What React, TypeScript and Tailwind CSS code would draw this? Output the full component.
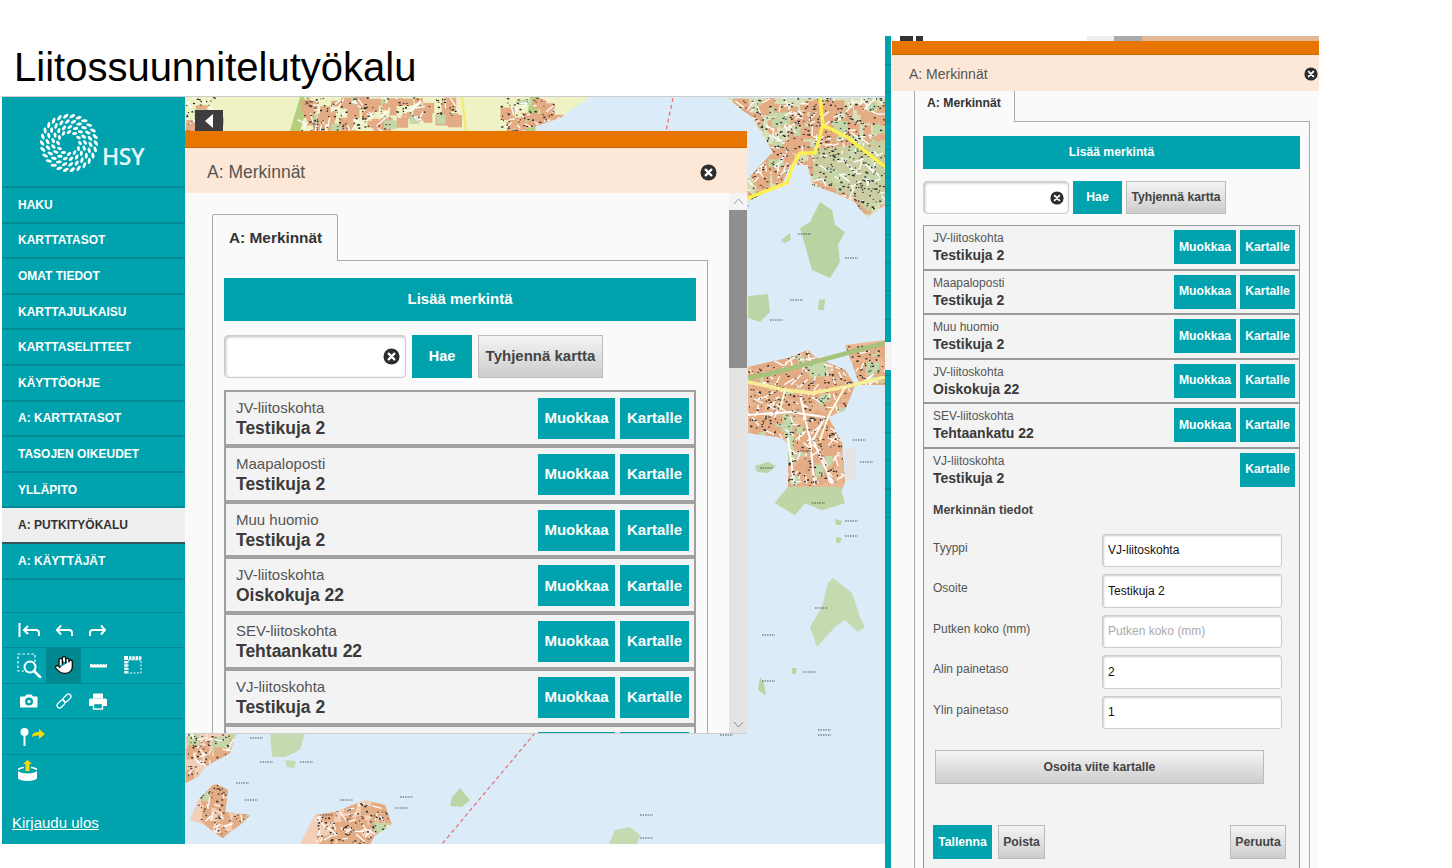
import type { ReactNode } from "react";
import { Hand } from "lucide-react";

const navItems = [
    "HAKU",
    "KARTTATASOT",
    "OMAT TIEDOT",
    "KARTTAJULKAISU",
    "KARTTASELITTEET",
    "KÄYTTÖOHJE",
    "A: KARTTATASOT",
    "TASOJEN OIKEUDET",
    "YLLÄPITO",
    "A: PUTKITYÖKALU",
    "A: KÄYTTÄJÄT",
];

const rows = [
    { type: "JV-liitoskohta", address: "Testikuja 2" },
    { type: "Maapaloposti", address: "Testikuja 2" },
    { type: "Muu huomio", address: "Testikuja 2" },
    { type: "JV-liitoskohta", address: "Oiskokuja 22" },
    { type: "SEV-liitoskohta", address: "Tehtaankatu 22" },
    { type: "VJ-liitoskohta", address: "Testikuja 2" },
];

const formRows = [
    { label: "Tyyppi", value: "VJ-liitoskohta" },
    { label: "Osoite", value: "Testikuja 2" },
    { label: "Putken koko (mm)", value: "" },
    { label: "Alin painetaso", value: "2" },
    { label: "Ylin painetaso", value: "1" },
];

// small seeded generator so the map texture stays the same between runs
function makeRandom(seed: number) {
    let s = seed;
    return () => {
        s = (s * 16807) % 2147483647;
        return s / 2147483647;
    };
}

const urbanAreas = [
    { x: 185, y: 97, w: 30, h: 34 },
    { x: 300, y: 97, w: 90, h: 34 },
    { x: 395, y: 97, w: 60, h: 20 },
    { x: 500, y: 97, w: 55, h: 34 },
    { x: 730, y: 97, w: 155, h: 115 },
    { x: 747, y: 345, w: 138, h: 150 },
    { x: 185, y: 733, w: 50, h: 55 },
    { x: 198, y: 783, w: 55, h: 55 },
    { x: 315, y: 800, w: 75, h: 44 },
];

function buildTexture() {
    const rand = makeRandom(4711);
    const blocks: { x: number; y: number; w: number; h: number; c: string }[] = [];
    const streets: string[] = [];
    const specks: { x: number; y: number; w: number; h: number }[] = [];
    for (const a of urbanAreas) {
        const area = a.w * a.h;
        for (let i = 0; i < area / 60; i++) {
            blocks.push({
                x: a.x + rand() * a.w,
                y: a.y + rand() * a.h,
                w: 6 + rand() * 10,
                h: 5 + rand() * 8,
                c: rand() > 0.12 ? "#e3ac84" : "#c3d7a8",
            });
        }
        for (let i = 0; i < area / 90; i++) {
            const x = a.x + rand() * a.w;
            const y = a.y + rand() * a.h;
            streets.push(`M${x} ${y}l${(rand() - 0.5) * 20} ${(rand() - 0.5) * 20}`);
        }
        for (let i = 0; i < area / 32; i++) {
            specks.push({
                x: a.x + rand() * a.w,
                y: a.y + rand() * a.h,
                w: 0.8 + rand() * 1.6,
                h: 0.8 + rand() * 0.8,
            });
        }
    }
    return { blocks, streets, specks };
}

const texture = buildTexture();

const labels = [
    [736, 206], [798, 234], [845, 258], [760, 468], [800, 451], [853, 440],
    [860, 462], [812, 503], [845, 521], [845, 536], [815, 608], [762, 635], [803, 672], [762, 681],
    [818, 730], [818, 735], [250, 738], [260, 762], [300, 762], [236, 783], [245, 800], [340, 800],
    [320, 815], [395, 808], [400, 797], [640, 815], [640, 838], [720, 735], [790, 300], [770, 320],
];

function MapArt() {
    return (
        <svg className="absolute inset-0 h-full w-full" viewBox="185 97 700 747" preserveAspectRatio="none">
            <defs>
                <clipPath id="land">
                    <path d="M185 97H590L560 118L520 131H185Z" />
                    <path d="M727 98H885V205L867 218L855 202L833 192L812 185L808 165L790 165L783 182L748 202L747 180L773 152L753 118Z" />
                    <path d="M748 367L788 358L808 350L815 357L845 370L855 385L845 410L828 417L842 443L845 483L788 487L788 443L778 437L748 433Z" />
                    <path d="M845 345L885 340V385L860 385Z" />
                    <path d="M185 733H236L230 753L205 767L198 777L185 783Z" />
                    <path d="M198 800L215 783L228 790L225 812L250 815L240 825L222 838L205 825L190 820Z" />
                    <path d="M315 815L335 812L365 800L385 805L392 825L375 835L370 844H300Z" />
                </clipPath>
            </defs>
            <rect x="185" y="97" width="700" height="747" fill="#dbecf8" />
            {/* base land */}
            <path d="M185 97H590L560 118L520 131H185Z" fill="#eef2c4" />
            <path d="M727 98H885V205L867 218L855 202L833 192L812 185L808 165L790 165L783 182L748 202L747 180L773 152L753 118Z" fill="#d9dfb9" />
            <path d="M748 367L788 358L808 350L815 357L845 370L855 385L845 410L828 417L842 443L845 483L838 497L845 503L822 510L805 503L795 515L775 503L788 487L788 443L778 437L748 433Z" fill="#e8b995" />
            <path d="M775 503L788 487H840L845 503L822 510L805 503L795 515Z" fill="#bfd5a5" />
            <path d="M845 450L855 447L857 478L846 482Z" fill="#e4e4e4" />
            <path d="M845 345L885 340V385L860 385Z" fill="#eab993" />
            <path d="M185 733H236L230 753L205 767L198 777L185 783Z" fill="#f3cfb7" />
            <path d="M198 800L215 783L228 790L225 812L250 815L240 825L222 838L205 825L190 820Z" fill="#f3cfb7" />
            <path d="M315 815L335 812L365 800L385 805L392 825L375 835L370 844H300Z" fill="#f3cfb7" />
            {/* green islands */}
            <path d="M820 202L832 210L835 225L845 232L838 245L840 262L830 278L812 270L805 245L800 228L810 222Z" fill="#b9d3a2" />
            <path d="M833 578L852 593L860 617L865 627L858 632L845 620L835 627L817 647L810 627L822 607L828 583Z" fill="#c5dab0" />
            <path d="M270 733H305L300 750L285 757L272 757Z" fill="#c5dab0" />
            <path d="M285 760L296 761L294 768L287 767Z" fill="#c5dab0" />
            <path d="M452 797L460 788L470 800L462 807L450 806Z" fill="#bcd5a6" />
            <path d="M609 844L615 830L630 827L640 835L637 844Z" fill="#c5dab0" />
            <path d="M758 690L760 677L764 683L766 696Z" fill="#bcd5a6" />
            <path d="M792 668L797 668L796 674L792 674Z" fill="#bcd5a6" />
            <path d="M835 519L842 521L841 525L836 525Z" fill="#bcd5a6" />
            <path d="M836 537L842 538L840 543L836 543Z" fill="#bcd5a6" />
            <path d="M755 466L768 462L776 466L768 473L757 472Z" fill="#bcd5a6" />
            <path d="M748 296L768 294L770 312L760 322L748 318Z" fill="#bcd5a6" />
            <path d="M819 300L825 299L824 310L818 310Z" fill="#bcd5a6" />
            <path d="M781 240L790 233L791 240L784 243Z" fill="#bcd5a6" />
            <path d="M300 97L310 97L300 131H290Z" fill="#b5cf7e" />
            <path d="M530 97L542 97L535 131H525Z" fill="#b5cf7e" />
            {/* dense blocks, streets and map lettering */}
            <g clipPath="url(#land)">
                {texture.blocks.map((b, i) => (
                    <rect key={i} x={b.x} y={b.y} width={b.w} height={b.h} fill={b.c} />
                ))}
                <path d="M812 150L885 140V200L868 212L855 198L833 188L814 180Z" fill="#c3d7a8" opacity="0.75" />
                <path d="M782 413L792 415L795 463L788 465Z" fill="#c3d7a8" />
                <path d="M805 362L825 360L830 375L810 378Z" fill="#c3d7a8" />
                <path d={texture.streets.join("")} stroke="#ffffff" strokeWidth="1.300" fill="none" />
                <path d="M788 437L795 490M825 417L813 440L835 490M748 415L790 412L825 417M800 395L810 440L815 490" stroke="#ffffff" strokeWidth="2" fill="none" />
                {texture.specks.map((s, i) => (
                    <rect key={i} x={s.x} y={s.y} width={s.w} height={s.h} fill="#2a2a2a" />
                ))}
            </g>
            {labels.map(([x, y], i) => (
                <path key={i} d={`M${x} ${y}h13`} stroke="#333" strokeWidth="1.200" strokeDasharray="1.500 1" opacity="0.8" />
            ))}
            {/* roads */}
            <path d="M885 167L847 137L823 125L820 98M823 125L815 153L800 153L793 165L787 183L748 198" stroke="#fdf04e" strokeWidth="3.500" fill="none" />
            <path d="M885 343L777 372L748 378" stroke="#a7c27a" strokeWidth="4.500" fill="none" />
            <path d="M748 382L785 390L812 393L845 387L885 377" stroke="#f7ee9a" strokeWidth="3.500" fill="none" />
            <path d="M785 390L780 410M845 387L828 417L820 440" stroke="#fffbd8" strokeWidth="2" fill="none" />
            <path d="M462 97L466 131" stroke="#f4e96b" strokeWidth="2" fill="none" />
            <path d="M673 98L666 131M535 733L442 844" stroke="#e86a72" strokeWidth="1.200" strokeDasharray="4 3" fill="none" />
        </svg>
    );
}

function HsyLogo() {
    const dots: { x: number; y: number; r: number; w: number }[] = [];
    const rings = [
        { radius: 27, count: 26, w: 3.1 },
        { radius: 21.5, count: 22, w: 2.9 },
        { radius: 16, count: 17, w: 2.7 },
        { radius: 11, count: 12, w: 2.5 },
    ];
    rings.forEach((ring, k) => {
        for (let i = 0; i < ring.count; i++) {
            const a = (i / ring.count) * Math.PI * 2 + k * 0.35;
            dots.push({
                x: 29 + Math.cos(a) * ring.radius,
                y: 29 + Math.sin(a) * ring.radius,
                r: (a * 180) / Math.PI + 55,
                w: ring.w,
            });
        }
    });
    return (
        <svg width="58" height="58" viewBox="0 0 58 58">
            {dots.map((d, i) => (
                <ellipse key={i} cx={d.x} cy={d.y} rx={d.w} ry={1.5} fill="#fff" transform={`rotate(${d.r} ${d.x} ${d.y})`} />
            ))}
        </svg>
    );
}

function CloseIcon({ size }: { size: number }) {
    return (
        <svg width={size} height={size} viewBox="0 0 18 18" className="shrink-0">
            <circle cx="9" cy="9" r="8.500" fill="#2d2d2d" />
            <path d="M6 6l6 6M12 6l-6 6" stroke="#fff" strokeWidth="2.400" strokeLinecap="round" />
        </svg>
    );
}

function ToolIcon({ w, h, children }: { w: number; h: number; children: ReactNode }) {
    return (
        <svg width={w} height={h} viewBox={`0 0 ${w} ${h}`} fill="none" stroke="#fff" strokeWidth="2" className="shrink-0">
            {children}
        </svg>
    );
}

function ToolRow({ children }: { children: ReactNode }) {
    return <div className="flex h-[35.6px] items-center border-b border-[#008a93]">{children}</div>;
}

function Sidebar() {
    return (
        <aside className="flex w-[183px] shrink-0 flex-col bg-[#00a3ad]">
            <div className="flex h-[89px] shrink-0 items-start pl-[38px] pt-[17px]">
                <HsyLogo />
                <span className="ml-[4px] mt-[30px] font-['Open_Sans',sans-serif] text-[23px] font-semibold leading-[24px] tracking-[-0.5px] text-white/90">
                    HSY
                </span>
            </div>
            <nav className="flex flex-col border-t-2 border-[#008a93]">
                {navItems.map((item) =>
                    item === "A: PUTKITYÖKALU" ? (
                        <div
                            key={item}
                            className="flex h-[35.6px] items-center border-b-2 border-[#33565a] bg-[#eeeeee] pl-[16px] text-[12px] font-bold text-[#333]"
                        >
                            {item}
                        </div>
                    ) : (
                        <div
                            key={item}
                            className="flex h-[35.6px] items-center border-b-2 border-[#008a93] pl-[16px] text-[12px] font-bold text-white"
                        >
                            {item}
                        </div>
                    ),
                )}
            </nav>
            <div className="h-[33px] shrink-0 border-b border-[#008a93]" />
            <div className="flex flex-col">
                <ToolRow>
                    <div className="ml-[9px] flex w-[35px] justify-center">
                        <ToolIcon w={22} h={16}>
                            <path d="M1.500 1v14M21 14v-3a3 3 0 0 0-3-3H6M10 4L6 8l4 4" />
                        </ToolIcon>
                    </div>
                    <div className="flex w-[35px] justify-center">
                        <ToolIcon w={18} h={14}>
                            <path d="M17 13v-3a3 3 0 0 0-3-3H2M6 2.500L2 7l4 4.500" />
                        </ToolIcon>
                    </div>
                    <div className="flex w-[34px] justify-center">
                        <ToolIcon w={18} h={14}>
                            <path d="M1 13v-3a3 3 0 0 1 3-3h12M12 2.500L16 7l-4 4.500" />
                        </ToolIcon>
                    </div>
                </ToolRow>
                <ToolRow>
                    <div className="flex w-[44px] justify-center pl-[10px]">
                        <ToolIcon w={25} h={25}>
                            <rect x="1" y="1" width="17" height="17" strokeWidth="1.200" strokeDasharray="2.500 2" />
                            <circle cx="13" cy="14" r="5.500" fill="#00a3ad" />
                            <path d="M17 18l6 6" strokeWidth="2.600" strokeLinecap="round" />
                        </ToolIcon>
                    </div>
                    <div className="flex h-full w-[35px] items-center justify-center bg-[#008790]">
                        <Hand size={20} fill="#fff" stroke="#111" strokeWidth={1.6} />
                    </div>
                    <div className="flex w-[35px] justify-center">
                        <ToolIcon w={17} h={5}>
                            <rect x="0" y="1" width="17" height="3.500" fill="#fff" stroke="none" />
                            <path d="M3 0v2M6 0v2M9 0v2M12 0v2M15 0v2" stroke="#00a3ad" strokeWidth="1" />
                        </ToolIcon>
                    </div>
                    <div className="flex w-[34px] justify-center">
                        <ToolIcon w={18} h={18}>
                            <rect x="4" y="4" width="13" height="13" strokeWidth="1" strokeDasharray="2 1.500" />
                            <rect x="0" y="0" width="4" height="4" fill="#fff" stroke="none" />
                            <path d="M5 2h13M2 5v13" strokeWidth="3.500" strokeDasharray="2.500 0.800" />
                        </ToolIcon>
                    </div>
                </ToolRow>
                <ToolRow>
                    <div className="ml-[9px] flex w-[35px] justify-center">
                        <ToolIcon w={18} h={14}>
                            <path d="M1 2.500h4l1.500-2h5l1.500 2h4a1 1 0 0 1 .5 1v9a1 1 0 0 1-1 1H1a1 1 0 0 1-1-1v-9a1 1 0 0 1 1-1z" fill="#fff" stroke="none" />
                            <circle cx="9" cy="7.500" r="3" fill="#00a3ad" stroke="#00a3ad" />
                            <circle cx="9" cy="7.500" r="1.600" fill="#fff" stroke="none" />
                        </ToolIcon>
                    </div>
                    <div className="flex w-[35px] justify-center">
                        <ToolIcon w={18} h={18}>
                            <g strokeWidth="1.300">
                                <rect x="-4.500" y="-2.500" width="9" height="5" rx="2.500" transform="translate(6 12) rotate(-45)" />
                                <rect x="-4.500" y="-2.500" width="9" height="5" rx="2.500" transform="translate(12 6) rotate(-45)" />
                            </g>
                        </ToolIcon>
                    </div>
                    <div className="flex w-[34px] justify-center">
                        <ToolIcon w={18} h={17}>
                            <rect x="4" y="0.500" width="10" height="5" fill="#fff" stroke="none" />
                            <path d="M1.500 5.500h15a1.500 1.500 0 0 1 1.500 1.500v6h-18v-6a1.500 1.500 0 0 1 1.500-1.500z" fill="#fff" stroke="none" />
                            <rect x="4.500" y="10.500" width="9" height="5.500" fill="#00a3ad" stroke="#fff" strokeWidth="1.400" />
                        </ToolIcon>
                    </div>
                </ToolRow>
                <ToolRow>
                    <div className="pl-[17px]">
                        <ToolIcon w={27} h={20}>
                            <circle cx="5.500" cy="5" r="4" fill="#fff" stroke="none" />
                            <path d="M5.500 8v11" strokeWidth="2" />
                            <path d="M13 10c0-4 3-5 7-5V2l6 5-6 5V8.500c-3 0-5 0-7 1.500z" fill="#f5d90a" stroke="none" />
                        </ToolIcon>
                    </div>
                </ToolRow>
                <div className="h-[35.6px] pl-[16px] pt-[5px]">
                    <ToolIcon w={19} h={21}>
                        <path d="M0 10.500a9.500 3 0 0 0 19 0V18a9.500 3 0 0 1-19 0z" fill="#fff" stroke="none" />
                        <path d="M5 4L9.500 0 14 4h-2.500v7h-4V4z" fill="#f5d90a" stroke="none" />
                        <path d="M0 9.500c2-1.500 4-2 6-2M19 9.500c-2-1.500-4-2-6-2" strokeWidth="1.600" />
                    </ToolIcon>
                </div>
            </div>
            <div className="mt-auto pb-[9px] pl-[10px]">
                <a className="text-[15px] leading-[18px] text-white underline">Kirjaudu ulos</a>
            </div>
        </aside>
    );
}

function LeftPanel() {
    return (
        <div className="absolute left-0 top-[34px] flex h-[603px] w-[562px] flex-col border-b border-[#cfcfcf] bg-[#fafafa]">
            <div className="h-[17px] shrink-0 border-b border-[#c96600] bg-[#e87500]" />
            <div className="flex h-[45px] shrink-0 items-center justify-between bg-[#fde8d7] pl-[22px] pr-[30px] pt-[3px]">
                <span className="text-[17.5px] text-[#555]">A: Merkinnät</span>
                <CloseIcon size={17} />
            </div>
            <div className="flex min-h-0 flex-1">
                <div className="min-w-0 flex-1 overflow-hidden pl-[27px] pr-[21px] pt-[21px]">
                    <div className="relative z-10 -mb-px flex h-[47px] w-[126px] items-center rounded-t-[2px] border border-b-0 border-[#aaa] bg-[#fafafa] pl-[16px] text-[15.4px] font-bold text-[#333]">
                        A: Merkinnät
                    </div>
                    <div className="h-[600px] border border-[#aaa] px-[11px] pt-[17px]">
                        <button className="h-[43px] w-full bg-[#00a3ad] text-[15px] font-bold text-white">Lisää merkintä</button>
                        <div className="mt-[14px] flex h-[43px] gap-[6px]">
                            <div className="flex w-[182px] items-center justify-end rounded-[4px] border border-[#ccc] bg-white pr-[5px] shadow-[inset_1px_1px_3px_#bbb]">
                                <CloseIcon size={17} />
                            </div>
                            <button className="w-[60px] bg-[#00a3ad] text-[14.5px] font-bold text-white">Hae</button>
                            <button className="w-[125px] border border-[#bbb] bg-linear-to-b from-[#f4f4f4] to-[#cdcdcd] text-[15px] font-bold text-[#444]">
                                Tyhjennä kartta
                            </button>
                        </div>
                        <div className="mt-[12px] flex flex-col">
                            {rows.map((row, i) => (
                                <div key={i} className="flex h-[55.8px] shrink-0 justify-between border-2 border-[#a0a0a0] bg-[#f3f3f3]">
                                    <div className="pl-[10px] pt-[6px]">
                                        <div className="text-[15px] leading-[20px] text-[#555]">{row.type}</div>
                                        <div className="text-[17.5px] font-bold leading-[20px] text-[#3a3a3a]">{row.address}</div>
                                    </div>
                                    <div className="flex gap-[5px] pr-[5px] pt-[6px]">
                                        <button className="h-[41px] w-[77px] bg-[#00a3ad] text-[15px] font-bold text-white">Muokkaa</button>
                                        <button className="h-[41px] w-[69px] bg-[#00a3ad] text-[15px] font-bold text-white">Kartalle</button>
                                    </div>
                                </div>
                            ))}
                            {/* next row, only its top edge shows above the panel's fold */}
                            <div className="flex h-[55.8px] shrink-0 justify-end gap-[5px] border-2 border-[#a0a0a0] bg-[#f3f3f3] pr-[5px] pt-[5px]">
                                <div className="h-[41px] w-[77px] bg-[#00a3ad]" />
                                <div className="h-[41px] w-[69px] bg-[#00a3ad]" />
                            </div>
                        </div>
                    </div>
                </div>
                <div className="flex w-[18px] shrink-0 flex-col bg-[#e4e4e4]">
                    <div className="flex h-[17px] items-center justify-center bg-[#f4f4f4]">
                        <svg width="11" height="7" viewBox="0 0 11 7" fill="none" stroke="#999" strokeWidth="1">
                            <path d="M1 6l4.500-5 4.500 5" />
                        </svg>
                    </div>
                    <div className="h-[158px] bg-[#8f8f8f]" />
                    <div className="flex flex-1 items-end justify-center pb-[5px]">
                        <svg width="11" height="7" viewBox="0 0 11 7" fill="none" stroke="#888" strokeWidth="1">
                            <path d="M1 1l4.500 5 4.500-5" />
                        </svg>
                    </div>
                </div>
            </div>
        </div>
    );
}

function GrayButton({ className, children }: { className: string; children: ReactNode }) {
    return (
        <button className={`${className} border border-[#bbb] bg-linear-to-b from-[#f4f4f4] to-[#cdcdcd] text-[12.2px] font-bold text-[#444]`}>
            {children}
        </button>
    );
}

function RightPanel() {
    return (
        <div className="flex h-[832px] w-[427px] shrink-0 flex-col overflow-hidden bg-[#fafafa]">
            <div className="flex h-[5px] shrink-0 bg-white">
                <div className="w-[8px]" />
                <div className="w-[13px] bg-[#333]" />
                <div className="w-[3px]" />
                <div className="w-[7px] bg-[#333]" />
                <div className="w-[164px]" />
                <div className="w-[27px] bg-[#eeeeee]" />
                <div className="w-[28px] bg-[#aaaaaa]" />
                <div className="flex-1 bg-[#e3b896]" />
            </div>
            <div className="h-[14px] shrink-0 border-b border-[#c96600] bg-[#e87500]" />
            <div className="flex h-[36px] shrink-0 items-center justify-between bg-[#fde8d7] pl-[17px] pr-[1px] pt-[2px]">
                <span className="text-[14px] text-[#555]">A: Merkinnät</span>
                <CloseIcon size={14} />
            </div>
            <div className="min-h-0 flex-1 pl-[22px] pr-[9px]">
                <div className="relative z-10 -mb-px flex h-[31px] w-[101px] items-center border-r border-l border-[#aaa] bg-[#fafafa] pb-[6px] pl-[12px] text-[12.2px] font-bold text-[#333]">
                    A: Merkinnät
                </div>
                <div className="h-[800px] border border-[#aaa] pl-[8px] pr-[9px] pt-[14px]">
                    <button className="h-[33px] w-full bg-[#00a3ad] text-[12.2px] font-bold text-white">Lisää merkintä</button>
                    <div className="mt-[12px] flex h-[33px] gap-[4px]">
                        <div className="flex w-[146px] items-center justify-end rounded-[4px] border border-[#ccc] bg-white pr-[4px] shadow-[inset_1px_1px_3px_#bbb]">
                            <CloseIcon size={14} />
                        </div>
                        <button className="w-[49px] bg-[#00a3ad] text-[12.2px] font-bold text-white">Hae</button>
                        <GrayButton className="w-[100px]">Tyhjennä kartta</GrayButton>
                    </div>
                    <div className="mt-[11px] flex flex-col">
                        {rows.slice(0, 5).map((row, i) => (
                            <div key={i} className="flex h-[44.5px] shrink-0 justify-between border border-[#999] bg-[#f3f3f3]">
                                <div className="pl-[9px] pt-[5px]">
                                    <div className="text-[12px] leading-[14px] text-[#555]">{row.type}</div>
                                    <div className="mt-[2px] text-[14px] font-bold leading-[17px] text-[#3a3a3a]">{row.address}</div>
                                </div>
                                <div className="flex gap-[4px] pr-[4px] pt-[4px]">
                                    <button className="h-[34px] w-[62px] bg-[#00a3ad] text-[12.2px] font-bold text-white">Muokkaa</button>
                                    <button className="h-[34px] w-[55px] bg-[#00a3ad] text-[12.2px] font-bold text-white">Kartalle</button>
                                </div>
                            </div>
                        ))}
                        <div className="h-[460px] shrink-0 border border-[#999] bg-[#f3f3f3]">
                            <div className="flex h-[43px] justify-between">
                                <div className="pl-[9px] pt-[5px]">
                                    <div className="text-[12px] leading-[14px] text-[#555]">VJ-liitoskohta</div>
                                    <div className="mt-[2px] text-[14px] font-bold leading-[17px] text-[#3a3a3a]">Testikuja 2</div>
                                </div>
                                <div className="pr-[4px] pt-[4px]">
                                    <button className="h-[34px] w-[55px] bg-[#00a3ad] text-[12.2px] font-bold text-white">Kartalle</button>
                                </div>
                            </div>
                            <div className="mt-[10px] pl-[9px] text-[12.5px] font-bold leading-[16px] text-[#444]">Merkinnän tiedot</div>
                            <div className="mt-[16px] flex flex-col gap-[7px] pl-[9px]">
                                {formRows.map((f) => (
                                    <div key={f.label} className="flex items-start">
                                        <label className="w-[169px] pt-[6px] text-[12px] leading-[16px] text-[#555]">{f.label}</label>
                                        <input
                                            readOnly
                                            value={f.value}
                                            placeholder={f.label}
                                            className="h-[33.5px] w-[180px] rounded-[3px] border border-[#ccc] bg-white pl-[5px] text-[12px] text-[#111] shadow-[inset_1px_1px_2px_#ccc] placeholder:text-[#aaa]"
                                        />
                                    </div>
                                ))}
                            </div>
                            <div className="mt-[21px] pl-[11px]">
                                <GrayButton className="h-[34px] w-[329px]">Osoita viite kartalle</GrayButton>
                            </div>
                            <div className="mt-[41px] flex pl-[9px] pr-[13px]">
                                <button className="h-[34px] w-[59px] bg-[#00a3ad] text-[12.2px] font-bold text-white">Tallenna</button>
                                <GrayButton className="ml-[6px] h-[34px] w-[47px]">Poista</GrayButton>
                                <GrayButton className="ml-auto h-[34px] w-[56px]">Peruuta</GrayButton>
                            </div>
                        </div>
                    </div>
                </div>
            </div>
        </div>
    );
}

export default function App() {
    return (
        <div className="flex h-[868px] w-[1452px] overflow-hidden bg-white font-['Liberation_Sans',Arial,sans-serif]">
            {/* Left slide half: title and map application */}
            <div className="flex w-[885px] shrink-0 flex-col pl-[2px]">
                <h1 className="h-[96px] shrink-0 pl-[12px] pt-[42px] text-[40px] font-normal leading-[50px] text-black">
                    Liitossuunnitelutyökalu
                </h1>
                <div className="flex h-[748px] border-t border-[#ccc]">
                    <Sidebar />
                    <div className="relative min-w-0 flex-1">
                        <MapArt />
                        <div className="absolute left-[10px] top-[13px] flex h-[21px] w-[28px] items-center justify-center bg-[#3d3d3d]">
                            <svg width="9" height="14" viewBox="0 0 9 14">
                                <path d="M8 0v14L0 7z" fill="#fff" />
                            </svg>
                        </div>
                        <LeftPanel />
                    </div>
                </div>
            </div>
            {/* Right half: enlarged panel */}
            <div className="mt-[36px] flex h-[832px]">
                <div className="relative mr-px w-[6px] shrink-0 bg-[#00a3ad]">
                    <div className="mt-[28px] h-[476px] bg-[repeating-linear-gradient(to_bottom,#008a93_0,#008a93_1px,transparent_1px,transparent_28.3px)]" />
                    <div className="absolute left-0 top-[306px] h-[28px] w-[7px] bg-[#f2f2f2]" />
                </div>
                <RightPanel />
            </div>
        </div>
    );
}
